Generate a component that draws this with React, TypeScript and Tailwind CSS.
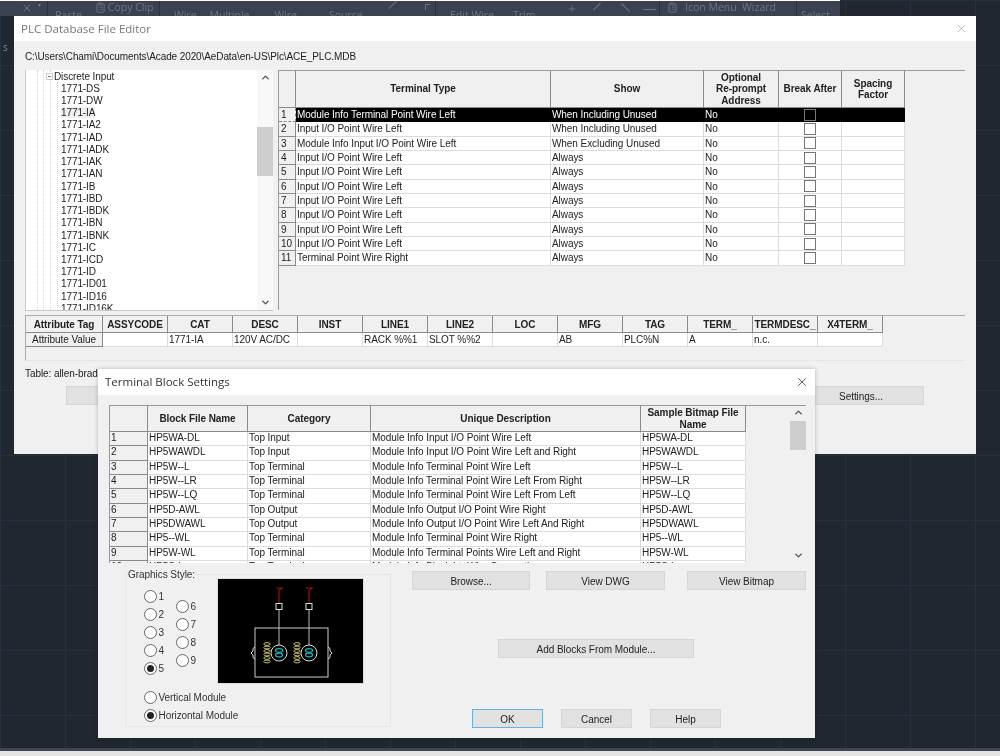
import { ChevronDown, ChevronUp, ClipboardList, Plus, X } from "lucide-react";

const sans = "font-['Liberation_Sans',Arial,sans-serif]";
const ui = "font-['Open_Sans','Noto_Sans',sans-serif]";

const treeItems = ["1771-DS", "1771-DW", "1771-IA", "1771-IA2", "1771-IAD", "1771-IADK", "1771-IAK", "1771-IAN", "1771-IB", "1771-IBD", "1771-IBDK", "1771-IBN", "1771-IBNK", "1771-IC", "1771-ICD", "1771-ID", "1771-ID01", "1771-ID16", "1771-ID16K"];

const terminals = [
  ["Module Info Terminal Point Wire Left", "When Including Unused"],
  ["Input I/O Point Wire Left", "When Including Unused"],
  ["Module Info Input I/O Point Wire Left", "When Excluding Unused"],
  ["Input I/O Point Wire Left", "Always"],
  ["Input I/O Point Wire Left", "Always"],
  ["Input I/O Point Wire Left", "Always"],
  ["Input I/O Point Wire Left", "Always"],
  ["Input I/O Point Wire Left", "Always"],
  ["Input I/O Point Wire Left", "Always"],
  ["Input I/O Point Wire Left", "Always"],
  ["Terminal Point Wire Right", "Always"],
];

const attrs = [
  ["ASSYCODE", ""], ["CAT", "1771-IA"], ["DESC", "120V AC/DC"], ["INST", ""], ["LINE1", "RACK %%1"], ["LINE2", "SLOT %%2"],
  ["LOC", ""], ["MFG", "AB"], ["TAG", "PLC%N"], ["TERM_", "A"], ["TERMDESC_", "n.c."], ["X4TERM_", ""],
];

const blocks = [
  ["HP5WA-DL", "Top Input", "Module Info Input I/O Point Wire Left", "HP5WA-DL"],
  ["HP5WAWDL", "Top Input", "Module Info Input I/O Point Wire Left and Right", "HP5WAWDL"],
  ["HP5W--L", "Top Terminal", "Module Info Terminal Point Wire Left", "HP5W--L"],
  ["HP5W--LR", "Top Terminal", "Module Info Terminal Point Wire Left From Right", "HP5W--LR"],
  ["HP5W--LQ", "Top Terminal", "Module Info Terminal Point Wire Left From Left", "HP5W--LQ"],
  ["HP5D-AWL", "Top Output", "Module Info Output I/O Point Wire Right", "HP5D-AWL"],
  ["HP5DWAWL", "Top Output", "Module Info Output I/O Point Wire Left And Right", "HP5DWAWL"],
  ["HP5--WL", "Top Terminal", "Module Info Terminal Point Wire Right", "HP5--WL"],
  ["HP5W-WL", "Top Terminal", "Module Info Terminal Points Wire Left and Right", "HP5W-WL"],
  ["HP5S-L", "Top Terminal", "Module Info Block Ltr Wire Connection", "HP5S-L"],
];

function Radio({ label, on }: { label: string; on?: boolean }) {
  return (
    <div className="flex h-[18px] items-center gap-[2px] text-[10px] tracking-[-0.05px] text-[#333]">
      <span className="-ml-[0.5px] flex h-[13px] w-[13px] items-center justify-center rounded-full border border-[#666] bg-white">
        {on && <span className="h-[7px] w-[7px] rounded-full bg-[#222]" />}
      </span>
      {label}
    </div>
  );
}

function Btn({ label, className }: { label: string; className: string }) {
  return (
    <div className={`flex h-[19px] items-center justify-center border border-[#d6d6d6] bg-[#e1e1e1] pt-[1px] text-[10px] tracking-[-0.05px] text-[#222] ${className}`}>
      {label}
    </div>
  );
}

function Diagram() {
  return (
    <svg viewBox="0 0 145 104" className="h-[106px] w-[147px] shrink-0 border border-[#ddd] bg-black">
      {[61, 91].map((x) => (
        <g key={x} fill="none">
          <path d={`M${x - 3} 9 L${x + 3} 9 L${x} 11 V24`} stroke="#a01010" strokeWidth="1.2" />
          <rect x={x - 3} y="24.5" width="6" height="6" stroke="#ddd" />
          <path d={`M${x} 31 V66`} stroke="#bbb" />
          <circle cx={x} cy="74" r="8" stroke="#ddd" />
          <ellipse cx={x} cy="71.5" rx="3.5" ry="1.8" stroke="#10b8c0" strokeWidth="1.2" />
          <ellipse cx={x} cy="76" rx="3.5" ry="1.8" stroke="#10b8c0" strokeWidth="1.2" />
          {[65, 68.5, 72, 75.5, 79, 82.5].map((y) => (
            <ellipse key={y} cx={x - 12} cy={y} rx="3.2" ry="1.4" stroke="#c8c070" />
          ))}
        </g>
      ))}
      <rect x="37" y="49" width="73" height="49" fill="none" stroke="#ccc" />
      <path d="M37 68 Q34 69 35 72 L33 74 L35 76 Q34 79 37 80 M110 68 Q113 69 112 72 L114 74 L112 76 Q113 79 110 80" fill="none" stroke="#ddd" />
    </svg>
  );
}

function Toolbar() {
  const label = "text-[10.5px] leading-none text-[#6d7582]";
  return (
    <div className={`flex h-[16px] w-[840px] border-t border-white bg-[#3a4250] ${ui}`}>
      <div className="flex h-full w-[48px] items-start border-r border-[#2b323d] pl-[21px] text-[#6d7582]">
        <X size={12} strokeWidth={2} className="mt-[1px]" />
        <span className="ml-[5px] text-[6px] leading-[8px]">▾</span>
      </div>
      <div className="flex h-full w-[112px] overflow-hidden border-r border-[#2b323d]">
        <span className={`${label} ml-[7px] mt-[9px]`}>Paste</span>
        <ClipboardList size={11} className="ml-[13px] mt-[1px] text-[#6d7582]" />
        <span className={`${label} ml-[2px] mt-[1px]`}>Copy Clip</span>
      </div>
      <div className="flex h-full w-[276px] overflow-hidden border-r border-[#2b323d]">
        <span className={`${label} ml-[14px] mt-[9px]`}>Wire</span>
        <span className={`${label} ml-[13px] mt-[9px]`}>Multiple</span>
        <span className={`${label} ml-[25px] mt-[9px]`}>Wire</span>
        <span className={`${label} ml-[32px] mt-[9px]`}>Source</span>
        <span className="ml-[24px] mt-[3px] h-[1px] w-[12px] -rotate-45 bg-[#6d7582]" />
        <span className="ml-[26px] mt-[3px] h-[6px] w-[5px] border-l border-t border-[#6d7582]" />
      </div>
      <div className="flex h-full w-[224px] overflow-hidden border-r border-[#2b323d]">
        <span className={`${label} ml-[14px] mt-[9px]`}>Edit Wire</span>
        <span className={`${label} ml-[19px] mt-[9px]`}>Trim</span>
        <Plus size={10} className="ml-[32px] mt-[3px] text-[#6d7582]" />
        <span className="ml-[15px] mt-[5px] h-[1px] w-[10px] -rotate-45 bg-[#6d7582]" />
        <span className="ml-[18px] mt-[6px] h-[1px] w-[11px] rotate-45 bg-[#6d7582]" />
        <span className="ml-[12px] mt-[8px] h-[1px] w-[13px] bg-[#6d7582]" />
      </div>
      <div className="flex h-full w-[137px] overflow-hidden border-r border-[#2b323d]">
        <ClipboardList size={11} className="ml-[7px] mt-[1px] text-[#6d7582]" />
        <span className={`${label} ml-[7px] mt-[1px] whitespace-pre`}>Icon Menu  Wizard</span>
      </div>
      <div className="flex h-full w-[42px] overflow-hidden">
        <span className={`${label} ml-[4px] mt-[9px]`}>Select</span>
      </div>
    </div>
  );
}

function EditorWindow() {
  return (
    <div className={`absolute left-[14px] top-[16px] h-[438px] w-[962px] bg-[#f0f0f0] ${sans}`}>
      <div className={`flex h-[25px] items-center justify-between bg-white pl-[7px] pr-[8px] text-[11.5px] text-[#777] ${ui}`}>
        <span>PLC Database File Editor</span>
        <X size={13} strokeWidth={1} className="text-[#888]" />
      </div>
      <div className="pl-[11px] pr-[11px]">
        <div className="flex h-[29px] items-center pt-[2px] text-[10px] tracking-[-0.1px] text-[#222]">
          C:\Users\Chami\Documents\Acade 2020\AeData\en-US\Plc\ACE_PLC.MDB
        </div>
        <div className="flex h-[245px] gap-[5px]">
          <div className="relative flex h-[241px] w-[248px] shrink-0 overflow-hidden border-b border-l border-[#c8c8c8] bg-white">
            <span className="absolute bottom-0 left-[11px] top-0 border-l border-dotted border-[#d4d4d4]" />
            <span className="absolute bottom-0 left-[17px] top-0 border-l border-dotted border-[#d4d4d4]" />
            <span className="absolute bottom-0 left-[24px] top-0 border-l border-dotted border-[#d4d4d4]" />
            <span className="absolute bottom-0 left-[31px] top-[12px] border-l border-dotted border-[#d4d4d4]" />
            <div className="flex-1 pt-[0.5px] text-[10px] leading-[12.24px] tracking-[-0.1px] text-[#222]">
              <div className="flex h-[12.24px] items-center pl-[20px]">
                <span className="relative mr-[1px] flex h-[7px] w-[7px] items-center justify-center border border-[#ccc] bg-white">
                  <span className="h-[1px] w-[3px] bg-[#777]" />
                </span>
                Discrete Input
              </div>
              {treeItems.map((t) => (
                <div key={t} className="h-[12.24px] pl-[35px]">
                  <span className={t === "1771-IA" ? "bg-[#f0f0f0]" : ""}>{t}</span>
                </div>
              ))}
            </div>
            <div className="flex w-[16px] shrink-0 flex-col items-center justify-between bg-[#f8f8f8] py-[2px] text-[#555]">
              <ChevronUp size={11} strokeWidth={3} />
              <ChevronDown size={11} strokeWidth={3} />
            </div>
            <span className="absolute right-0 top-[57px] h-[49px] w-[16px] bg-[#cdcdcd]" />
          </div>
          <div className="h-[240px] flex-1 border-l border-t border-[#999]">
            <div className="grid w-[626px] grid-cols-[17px_255px_153px_75px_63px_63px] text-[10px] tracking-[-0.07px] text-[#222]">
              {["", "Terminal Type", "Show", "Optional\nRe-prompt\nAddress", "Break After", "Spacing\nFactor"].map((h, i) => (
                <div key={i} className="flex h-[37px] items-center justify-center whitespace-pre-line border-b border-r border-[#8a8a8a] text-center font-bold leading-[11.5px]">
                  {h}
                </div>
              ))}
              {terminals.map((r, i) => {
                const row = i === 0 ? "border-black bg-black text-white" : "border-[#dcdcdc] bg-white";
                return (
                  <div key={i} className="contents">
                    <div className={`h-[14.35px] border-b border-r border-[#8a8a8a] pl-[2px] leading-[13px] ${i === 0 ? "border-dashed" : ""}`}>{i + 1}</div>
                    <div className={`h-[14.35px] truncate border-b border-r pl-[1px] leading-[13px] ${row}`}>{r[0]}</div>
                    <div className={`h-[14.35px] border-b border-r pl-[1px] leading-[13px] ${row}`}>{r[1]}</div>
                    <div className={`h-[14.35px] border-b border-r pl-[1px] leading-[13px] ${row}`}>No</div>
                    <div className={`flex h-[14.35px] items-center justify-center border-b border-r ${row}`}>
                      <span className={`h-[12px] w-[12px] border border-[#777] ${i === 0 ? "bg-black" : "bg-white"}`} />
                    </div>
                    <div className={`h-[14.35px] border-b border-r ${row}`} />
                  </div>
                );
              })}
            </div>
          </div>
        </div>
        <div className="h-[46px] border-b border-l border-t border-b-[#e6e6e6] border-l-[#aaa] border-t-[#aaa]">
          <div className="grid w-[857px] grid-cols-[77px_repeat(12,65px)] text-[10px] tracking-[-0.07px] text-[#222]">
            <div className="flex h-[17px] items-center justify-center border-b border-r border-[#8a8a8a] font-bold">Attribute Tag</div>
            {attrs.map((a) => (
              <div key={a[0]} className="flex h-[17px] items-center justify-center border-b border-r border-[#8a8a8a] font-bold">{a[0]}</div>
            ))}
            <div className="flex h-[14px] items-center justify-center border-b border-r border-[#8a8a8a]">Attribute Value</div>
            {attrs.map((a) => (
              <div key={a[0]} className="flex h-[14px] items-center border-b border-r border-[#dcdcdc] bg-white pl-[1px]">{a[1]}</div>
            ))}
          </div>
        </div>
        <div className="mt-[7px] text-[10px] leading-[12px] tracking-[-0.07px] text-[#222]">Table: allen-bradley</div>
        <div className="mt-[6px] flex justify-between px-[41px]">
          <Btn label="" className="w-[126px]" />
          <Btn label="Settings..." className="w-[126px]" />
        </div>
      </div>
      <span className={`absolute -left-[11px] top-[25px] text-[10px] leading-[12px] text-[#7b8490] ${ui}`}>s</span>
    </div>
  );
}

function SettingsWindow() {
  return (
    <div className={`absolute left-[98px] top-[369px] h-[369px] w-[717px] bg-[#f0f0f0] shadow-[0_0_4px_rgba(0,0,0,0.25)] ${sans}`}>
      <div className={`flex h-[26px] items-center justify-between bg-white pl-[7px] pr-[6px] text-[11.5px] text-[#333] ${ui}`}>
        <span>Terminal Block Settings</span>
        <X size={14} strokeWidth={1.25} className="text-[#222]" />
      </div>
      <div className="ml-[11px] mr-[9px] mt-[10px] flex h-[158px] overflow-hidden border-t border-[#999]">
        <div className="grid w-[636px] shrink-0 grid-cols-[38px_100px_123px_270px_105px] content-start border-l border-[#999] text-[10px] tracking-[-0.07px] text-[#222]">
          {["", "Block File Name", "Category", "Unique Description", "Sample Bitmap File\nName"].map((h, i) => (
            <div key={i} className="flex h-[26px] items-center justify-center whitespace-pre-line border-b border-r border-[#8a8a8a] text-center font-bold leading-[11.5px]">
              {h}
            </div>
          ))}
          {blocks.map((r, i) => (
            <div key={i} className="contents">
              <div className="h-[14.35px] border-b border-r border-[#8a8a8a] pl-[1px] leading-[12px]">{i + 1}</div>
              {r.map((c, j) => (
                <div key={j} className="h-[14.35px] truncate border-b border-r border-[#dcdcdc] bg-white pl-[1px] leading-[12px]">{c}</div>
              ))}
            </div>
          ))}
        </div>
        <div className="relative ml-auto flex w-[16px] flex-col items-center justify-between py-[1px] pb-[2px] text-[#555]">
          <ChevronUp size={11} strokeWidth={3} />
          <ChevronDown size={11} strokeWidth={3} />
          <span className="absolute left-0 top-[15px] h-[29px] w-[16px] bg-[#cdcdcd]" />
        </div>
      </div>
      <div className="flex">
        <div className="relative ml-[27px] mt-[11px] h-[153px] w-[266px] border border-[#e6e6e6]">
          <span className="absolute -top-[6px] left-[2px] bg-[#f0f0f0] text-[10px] leading-[12px] tracking-[-0.05px] text-[#333]">Graphics Style:</span>
          <div className="flex h-[109px] pl-[18px]">
            <div className="mt-[12px] w-[32px]">
              {["1", "2", "3", "4", "5"].map((n) => <Radio key={n} label={n} on={n === "5"} />)}
            </div>
            <div className="mt-[22px] w-[41px]">
              {["6", "7", "8", "9"].map((n) => <Radio key={n} label={n} />)}
            </div>
            <div className="mt-[3px]"><Diagram /></div>
          </div>
          <div className="mt-[4px] pl-[18px]">
            <Radio label="Vertical Module" />
            <Radio label="Horizontal Module" on />
          </div>
        </div>
        <div className="ml-[21px] w-[394px]">
          <div className="mt-[8px] flex justify-between">
            <Btn label="Browse..." className="w-[118px]" />
            <Btn label="View DWG" className="ml-[16px] w-[119px]" />
            <Btn label="View Bitmap" className="ml-[22px] w-[119px]" />
          </div>
          <Btn label="Add Blocks From Module..." className="ml-[86px] mt-[49px] w-[196px]" />
          <div className="ml-[60px] mt-[51px] flex gap-[18px]">
            <Btn label="OK" className="w-[71px] !border-[#6ab0e0]" />
            <Btn label="Cancel" className="w-[71px]" />
            <Btn label="Help" className="w-[71px]" />
          </div>
        </div>
      </div>
    </div>
  );
}

export default function App() {
  return (
    <div className="relative h-[756px] w-[1000px] overflow-hidden bg-[#1f2730] bg-[linear-gradient(#28313b_1px,transparent_1px),linear-gradient(90deg,#28313b_1px,transparent_1px)] bg-[size:65px_65px] blur-[0.35px]">
      <Toolbar />
      <EditorWindow />
      <SettingsWindow />
      <div className="absolute bottom-0 left-0 right-0 h-[8px] border-t-[3px] border-[#3d4754] bg-[#e4e4e4]" />
    </div>
  );
}
